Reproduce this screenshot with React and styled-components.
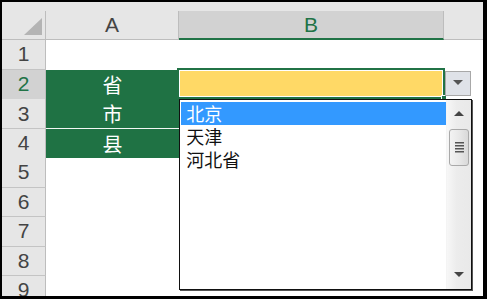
import React from "react";
import styled, { createGlobalStyle } from "styled-components";

const Global = createGlobalStyle`
  html, body { margin: 0; padding: 0; background: #fff; }
  * { box-sizing: border-box; }
`;

const GREEN = "#1f7244";
const SEL = "#217346";

const Frame = styled.div`
  position: relative;
  width: 487px;
  height: 299px;
  overflow: hidden;
  border-style: solid;
  border-color: #000;
  border-width: 2px 4px 3px 2px;
  background: #fff;
  font-family: "Liberation Sans", Arial, sans-serif;
`;

const TopStrip = styled.div`
  height: 9px;
  background: #e6e6e6;
`;

const Cols = `
  display: grid;
  grid-template-columns: 44px 133px 265px 1fr;
`;

const HeaderRow = styled.div`
  ${Cols}
  height: 29px;
  background: #e6e6e6;
`;

const Corner = styled.div`
  display: flex;
  align-items: flex-end;
  justify-content: flex-end;
  padding: 0 3px 4px 0;
  border-right: 1px solid #bdbdbd;
  border-bottom: 1px solid #bdbdbd;
`;

const ColHeader = styled.div`
  display: flex;
  align-items: center;
  justify-content: center;
  font-size: 21px;
  color: ${(p) => (p.$selected ? SEL : "#444")};
  background: ${(p) => (p.$selected ? "#d2d2d2" : "#e6e6e6")};
  border-right: ${(p) => (p.$filler ? "none" : "1px solid #bdbdbd")};
  border-bottom: ${(p) => (p.$selected ? `2px solid ${SEL}` : "1px solid #bdbdbd")};
  padding-top: ${(p) => (p.$selected ? "1px" : "0")};
`;

const Row = styled.div`
  ${Cols}
  height: 29.5px;
`;

const RowHeader = styled.div`
  display: flex;
  align-items: center;
  justify-content: center;
  font-size: 21px;
  color: ${(p) => (p.$selected ? SEL : "#444")};
  background: ${(p) => (p.$selected ? "#d2d2d2" : "#e6e6e6")};
  border-right: 1px solid #bdbdbd;
  border-bottom: 1px solid #c4c4c4;
`;

const Cell = styled.div`
  display: flex;
  align-items: center;
  justify-content: center;
  background: ${(p) => p.$fill || "#fff"};
  color: #fff;
  font-family: "Noto Sans CJK SC", "Noto Sans", sans-serif;
  font-size: 20px;
  border-bottom: ${(p) => (p.$fill === GREEN ? "1px solid #f2f7f4" : "none")};
`;

const Selection = styled.div`
  position: absolute;
  left: 175px;
  top: 65.7px;
  width: 268px;
  height: 31px;
  border: 2px solid ${SEL};
  box-shadow: inset 0 0 0 1px #fff;
`;

const FillHandle = styled.div`
  position: absolute;
  left: 438.5px;
  top: 93px;
  width: 6px;
  height: 6px;
  background: ${SEL};
  border: 1px solid #fff;
`;

const DropButton = styled.div`
  position: absolute;
  left: 443px;
  top: 68.7px;
  width: 26px;
  height: 25px;
  display: flex;
  align-items: center;
  justify-content: center;
  background: #dfe2e8;
  border: 1px solid #a8a8a8;
`;

const ListBox = styled.div`
  position: absolute;
  left: 177.3px;
  top: 96.5px;
  width: 293px;
  height: 191px;
  display: flex;
  background: #fff;
  border: 1px solid #111;
  box-shadow: 1px 1px 0 #555;
`;

const Items = styled.div`
  flex: 1;
  padding: 2px 0 0 1px;
  display: flex;
  flex-direction: column;
`;

const Item = styled.div`
  height: 23px;
  line-height: 23px;
  padding-left: 5px;
  font-family: "Noto Sans CJK SC", "Noto Sans", sans-serif;
  font-size: 18px;
  color: ${(p) => (p.$active ? "#fff" : "#111")};
  background: ${(p) => (p.$active ? "#3399ff" : "transparent")};
`;

const ScrollBar = styled.div`
  width: 25px;
  display: flex;
  flex-direction: column;
  align-items: center;
  background: linear-gradient(to right, #f7f7f7 0%, #ececec 40%, #e9e9e9 100%);
  border-left: 1px solid #f4f4f4;
`;

const Arrow = styled.div`
  height: ${(p) => p.$h}px;
  display: flex;
  align-items: center;
  justify-content: center;
`;

const Track = styled.div`
  flex: 1;
  width: 100%;
  display: flex;
  flex-direction: column;
  align-items: center;
  padding-top: 2px;
`;

const Thumb = styled.div`
  width: 20px;
  height: 37px;
  border: 1px solid #a9a9a9;
  border-radius: 3px;
  background: linear-gradient(to right, #f3f3f3 0%, #e8e8e8 50%, #d9d9d9 100%);
  display: flex;
  align-items: center;
  justify-content: center;
`;

const Up = () => (
  <svg width="10" height="6" viewBox="0 0 10 6">
    <path d="M0 6 L5 1 L10 6 Z" fill="#444" />
  </svg>
);
const Down = ({ c = "#444" }) => (
  <svg width="10" height="6" viewBox="0 0 10 6">
    <path d="M0 0 L10 0 L5 5 Z" fill={c} />
  </svg>
);
const Grip = () => (
  <svg width="9" height="11" viewBox="0 0 9 11">
    {[0, 3, 6, 9].map((y) => (
      <rect key={y} x="0" y={y} width="9" height="1.5" fill="#555" />
    ))}
  </svg>
);

const rows = [
  { n: 1 },
  { n: 2, a: "省", b: "#ffd966", sel: true },
  { n: 3, a: "市" },
  { n: 4, a: "县" },
  { n: 5 },
  { n: 6 },
  { n: 7 },
  { n: 8 },
  { n: 9 },
];

export default function App() {
  return (
    <>
      <Global />
      <Frame>
        <TopStrip />
        <HeaderRow>
          <Corner>
            <svg width="18" height="17" viewBox="0 0 18 17">
              <path d="M18 0 L18 17 L0 17 Z" fill="#b4b4b4" />
            </svg>
          </Corner>
          <ColHeader>A</ColHeader>
          <ColHeader $selected>B</ColHeader>
          <ColHeader $filler />
        </HeaderRow>
        {rows.map((r) => (
          <Row key={r.n}>
            <RowHeader $selected={r.sel}>{r.n}</RowHeader>
            <Cell $fill={r.a ? GREEN : undefined}>{r.a}</Cell>
            <Cell $fill={r.b} />
            <Cell />
          </Row>
        ))}
        <Selection />
        <FillHandle />
        <DropButton>
          <Down c="#555" />
        </DropButton>
        <ListBox>
          <Items>
            <Item $active>北京</Item>
            <Item>天津</Item>
            <Item>河北省</Item>
          </Items>
          <ScrollBar>
            <Arrow $h={27}>
              <Up />
            </Arrow>
            <Track>
              <Thumb>
                <Grip />
              </Thumb>
            </Track>
            <Arrow $h={28}>
              <Down />
            </Arrow>
          </ScrollBar>
        </ListBox>
      </Frame>
    </>
  );
}
